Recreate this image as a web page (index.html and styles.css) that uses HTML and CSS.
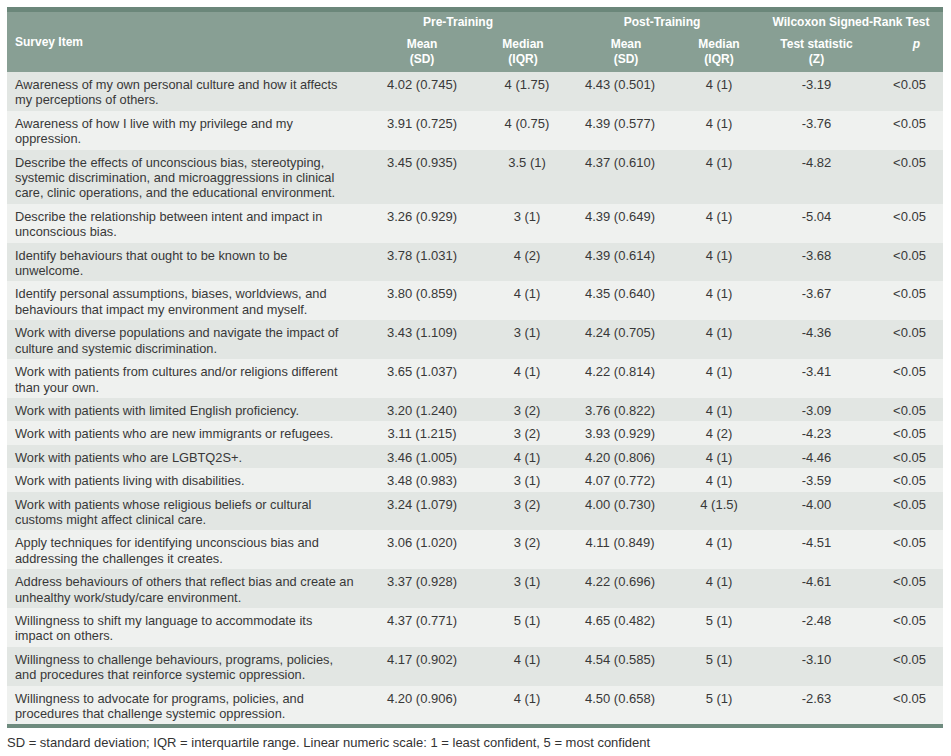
FILE: index.html
```html
<!DOCTYPE html>
<html lang="en">
<head>
<meta charset="utf-8">
<title>Survey results</title>
<link rel="stylesheet" href="styles.css">
</head>
<body>
<table class="results">
  <colgroup>
    <col class="c-item"><col class="c-m1"><col class="c-d1"><col class="c-m2"><col class="c-d2"><col class="c-z"><col class="c-p">
  </colgroup>
  <thead>
    <tr class="h1">
      <th rowspan="2" class="item">Survey Item</th>
      <th colspan="2" class="grp">Pre-Training</th>
      <th colspan="2" class="grp">Post-Training</th>
      <th colspan="2" class="grp grp-w">Wilcoxon Signed-Rank Test</th>
    </tr>
    <tr class="h2">
      <th>Mean<br>(SD)</th>
      <th class="sh-d1">Median<br>(IQR)</th>
      <th class="sh-m2">Mean<br>(SD)</th>
      <th>Median<br>(IQR)</th>
      <th>Test statistic<br>(Z)</th>
      <th class="sh-p"><i>p</i></th>
    </tr>
  </thead>
  <tbody>
    <tr><td>Awareness of my own personal culture and how it affects my perceptions of others.</td><td>4.02 (0.745)</td><td>4 (1.75)</td><td>4.43 (0.501)</td><td>4 (1)</td><td>-3.19</td><td>&lt;0.05</td></tr>
    <tr><td>Awareness of how I live with my privilege and my oppression.</td><td>3.91 (0.725)</td><td>4 (0.75)</td><td>4.39 (0.577)</td><td>4 (1)</td><td>-3.76</td><td>&lt;0.05</td></tr>
    <tr><td>Describe the effects of unconscious bias, stereotyping, systemic discrimination, and microaggressions in clinical care, clinic operations, and the educational environment.</td><td>3.45 (0.935)</td><td>3.5 (1)</td><td>4.37 (0.610)</td><td>4 (1)</td><td>-4.82</td><td>&lt;0.05</td></tr>
    <tr><td>Describe the relationship between intent and impact in unconscious bias.</td><td>3.26 (0.929)</td><td>3 (1)</td><td>4.39 (0.649)</td><td>4 (1)</td><td>-5.04</td><td>&lt;0.05</td></tr>
    <tr><td>Identify behaviours that ought to be known to be unwelcome.</td><td>3.78 (1.031)</td><td>4 (2)</td><td>4.39 (0.614)</td><td>4 (1)</td><td>-3.68</td><td>&lt;0.05</td></tr>
    <tr><td>Identify personal assumptions, biases, worldviews, and behaviours that impact my environment and myself.</td><td>3.80 (0.859)</td><td>4 (1)</td><td>4.35 (0.640)</td><td>4 (1)</td><td>-3.67</td><td>&lt;0.05</td></tr>
    <tr><td>Work with diverse populations and navigate the impact of culture and systemic discrimination.</td><td>3.43 (1.109)</td><td>3 (1)</td><td>4.24 (0.705)</td><td>4 (1)</td><td>-4.36</td><td>&lt;0.05</td></tr>
    <tr><td>Work with patients from cultures and/or religions different than your own.</td><td>3.65 (1.037)</td><td>4 (1)</td><td>4.22 (0.814)</td><td>4 (1)</td><td>-3.41</td><td>&lt;0.05</td></tr>
    <tr><td>Work with patients with limited English proficiency.</td><td>3.20 (1.240)</td><td>3 (2)</td><td>3.76 (0.822)</td><td>4 (1)</td><td>-3.09</td><td>&lt;0.05</td></tr>
    <tr><td>Work with patients who are new immigrants or refugees.</td><td>3.11 (1.215)</td><td>3 (2)</td><td>3.93 (0.929)</td><td>4 (2)</td><td>-4.23</td><td>&lt;0.05</td></tr>
    <tr><td>Work with patients who are LGBTQ2S+.</td><td>3.46 (1.005)</td><td>4 (1)</td><td>4.20 (0.806)</td><td>4 (1)</td><td>-4.46</td><td>&lt;0.05</td></tr>
    <tr><td>Work with patients living with disabilities.</td><td>3.48 (0.983)</td><td>3 (1)</td><td>4.07 (0.772)</td><td>4 (1)</td><td>-3.59</td><td>&lt;0.05</td></tr>
    <tr><td>Work with patients whose religious beliefs or cultural customs might affect clinical care.</td><td>3.24 (1.079)</td><td>3 (2)</td><td>4.00 (0.730)</td><td>4 (1.5)</td><td>-4.00</td><td>&lt;0.05</td></tr>
    <tr><td>Apply techniques for identifying unconscious bias and addressing the challenges it creates.</td><td>3.06 (1.020)</td><td>3 (2)</td><td>4.11 (0.849)</td><td>4 (1)</td><td>-4.51</td><td>&lt;0.05</td></tr>
    <tr><td>Address behaviours of others that reflect bias and create an unhealthy work/study/care environment.</td><td>3.37 (0.928)</td><td>3 (1)</td><td>4.22 (0.696)</td><td>4 (1)</td><td>-4.61</td><td>&lt;0.05</td></tr>
    <tr><td>Willingness to shift my language to accommodate its impact&nbsp;on others.</td><td>4.37 (0.771)</td><td>5 (1)</td><td>4.65 (0.482)</td><td>5 (1)</td><td>-2.48</td><td>&lt;0.05</td></tr>
    <tr><td>Willingness to challenge behaviours, programs, policies, and procedures that reinforce systemic oppression.</td><td>4.17 (0.902)</td><td>4 (1)</td><td>4.54 (0.585)</td><td>5 (1)</td><td>-3.10</td><td>&lt;0.05</td></tr>
    <tr><td>Willingness to advocate for programs, policies, and procedures that challenge systemic oppression.</td><td>4.20 (0.906)</td><td>4 (1)</td><td>4.50 (0.658)</td><td>5 (1)</td><td>-2.63</td><td>&lt;0.05</td></tr>
  </tbody>
</table>
<p class="note">SD = standard deviation; IQR = interquartile range. Linear numeric scale: 1 = least confident, 5 = most confident</p>
</body>
</html>
```
FILE: styles.css
```css
html, body {
  margin: 0;
  padding: 0;
  background: #ffffff;
}
body {
  padding: 7px;
  font-family: "Liberation Sans", Arial, sans-serif;
  font-size: 13px;
  color: #383838;
}
.results {
  width: 936px;
  border-collapse: collapse;
  table-layout: fixed;
  border-top: 5px solid #6b877a;
  border-bottom: 4px solid #6e8b7e;
}
.c-item { width: 356px; }
.c-m1 { width: 118px; }
.c-d1 { width: 92px; }
.c-m2 { width: 94px; }
.c-d2 { width: 104px; }
.c-z { width: 91px; }
.c-p { width: 81px; }

.results thead th {
  background: #889f94;
  color: #ffffff;
  font-size: 12px;
  font-weight: bold;
  line-height: 15px;
  text-align: center;
  padding: 0 4px;
  white-space: nowrap;
}
.results thead .item {
  text-align: left;
  padding-left: 8px;
  vertical-align: middle;
}
.results .h1 th {
  padding-top: 3px;
  padding-bottom: 2px;
}
.results .h1 .grp {
  padding-left: 0;
  padding-right: 20px;
}
.results .h1 .grp-w {
  padding-right: 12px;
}
.results .h2 th {
  padding-top: 5px;
  padding-bottom: 5px;
  vertical-align: top;
}
.results .h2 .sh-d1 {
  padding-right: 12px;
}
.results .h2 .sh-m2 {
  padding-left: 16px;
}
.results .h2 .sh-p {
  padding-left: 32px;
}
.results tbody td {
  line-height: 15.4px;
  padding: 5px 4px 3px;
  text-align: center;
  vertical-align: top;
}
.results tbody td:first-child {
  font-size: 12.8px;
  text-align: left;
  padding-left: 8px;
  padding-right: 8px;
}
.results tbody td:last-child {
  padding-left: 18px;
}
.results tbody tr:nth-child(odd) {
  background: #e2e6e3;
}
.results tbody tr:nth-child(even) {
  background: #eff1ef;
}
.note {
  margin: 7px 0 0;
  line-height: 15px;
  color: #333333;
}
```
